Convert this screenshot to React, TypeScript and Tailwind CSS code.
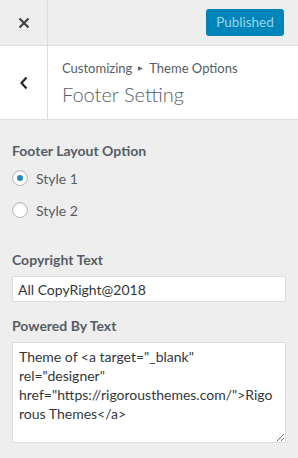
import React from "react";

export default function App() {
  const font = { fontFamily: 'Lato, "Noto Sans", sans-serif' };
  return (
    <div className="w-[298px] h-[458px] bg-[#eeeeee] overflow-hidden text-[#555d66]" style={font}>
      {/* top bar */}
      <div className="h-[46px] flex border-b border-[#dddddd] bg-[#eeeeee]">
        <div className="w-[48px] h-full border-r border-[#dddddd] flex items-center justify-center">
          <svg width="12" height="12" viewBox="0 0 12 12">
            <path d="M1.5 1.5 L10.5 10.5 M10.5 1.5 L1.5 10.5" stroke="#3c4247" strokeWidth="2.2" />
          </svg>
        </div>
        <div className="flex-1 flex items-center justify-end pr-[14px]">
          <div className="w-[78px] h-[27px] rounded-[3px] bg-[#0085ba] text-[#9fd4ea] text-[13.5px] flex items-center justify-center">
            Published
          </div>
        </div>
      </div>
      {/* section header */}
      <div className="h-[74px] flex bg-white border-b border-[#dddddd]">
        <div className="w-[48px] h-full border-r border-[#dddddd] flex items-center justify-center">
          <svg width="10" height="14" viewBox="0 0 10 14">
            <path d="M7.5 1.5 L2.5 7 L7.5 12.5" stroke="#23282d" strokeWidth="2.2" fill="none" />
          </svg>
        </div>
        <div className="flex-1 pl-[14px] pt-[12px]">
          <div className="text-[13px] leading-[20px] text-[#555d66] flex items-center">
            Customizing
            <span className="text-[6px] mx-[6px] text-[#555d66]">▶</span>
            Theme Options
          </div>
          <div className="text-[20px] leading-[28px] font-light text-[#555d66] mt-[2px]">Footer Setting</div>
        </div>
      </div>
      {/* body */}
      <div className="px-[12px] pt-[21px]">
        <div className="text-[14px] font-bold leading-[20px]">Footer Layout Option</div>
        <div className="mt-[8px] flex flex-col gap-[14px]">
          <label className="flex items-center h-[18px]">
            <span className="w-[16px] h-[16px] rounded-full border border-[#b4b9be] bg-white flex items-center justify-center shadow-[inset_0_1px_2px_rgba(0,0,0,0.1)]">
              <span className="w-[6px] h-[6px] rounded-full bg-[#1e8cbe]" />
            </span>
            <span className="ml-[8px] text-[14px]">Style 1</span>
          </label>
          <label className="flex items-center h-[18px]">
            <span className="w-[16px] h-[16px] rounded-full border border-[#b4b9be] bg-white shadow-[inset_0_1px_2px_rgba(0,0,0,0.1)]" />
            <span className="ml-[8px] text-[14px]">Style 2</span>
          </label>
        </div>
        <div className="mt-[31px] text-[14px] font-bold leading-[20px]">Copyright Text</div>
        <div className="mt-[6px] h-[26px] w-[274px] border border-[#dddddd] bg-white px-[5px] text-[14px] text-[#32373c] flex items-center">
          All CopyRight@2018
        </div>
        <div className="mt-[14px] text-[14px] font-bold leading-[20px]">Powered By Text</div>
        <textarea
          readOnly
          className="mt-[6px] block w-[274px] h-[101px] border border-[#dddddd] bg-white px-[6px] py-[4px] text-[14px] leading-[19px] text-[#32373c] resize-y outline-none"
          style={font}
          value={'Theme of <a target="_blank"\nrel="designer"\nhref="https://rigorousthemes.com/">Rigo\nrous Themes</a>'}
        />
      </div>
    </div>
  );
}
